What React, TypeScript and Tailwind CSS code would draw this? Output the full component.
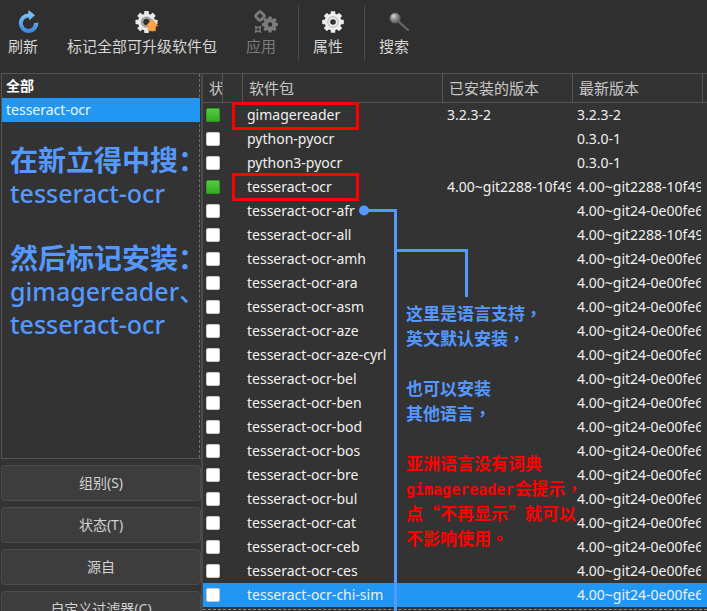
import React from "react";

type Pkg = { name: string; installed?: string; latest: string; selected?: boolean };

const LANG = "4.00~git24-0e00fe6";
const packages: Pkg[] = [
  { name: "gimagereader", installed: "3.2.3-2", latest: "3.2.3-2" },
  { name: "python-pyocr", latest: "0.3.0-1" },
  { name: "python3-pyocr", latest: "0.3.0-1" },
  { name: "tesseract-ocr", installed: "4.00~git2288-10f49", latest: "4.00~git2288-10f49" },
  { name: "tesseract-ocr-afr", latest: LANG },
  { name: "tesseract-ocr-all", latest: "4.00~git2288-10f49" },
  { name: "tesseract-ocr-amh", latest: LANG },
  { name: "tesseract-ocr-ara", latest: LANG },
  { name: "tesseract-ocr-asm", latest: LANG },
  { name: "tesseract-ocr-aze", latest: LANG },
  { name: "tesseract-ocr-aze-cyrl", latest: LANG },
  { name: "tesseract-ocr-bel", latest: LANG },
  { name: "tesseract-ocr-ben", latest: LANG },
  { name: "tesseract-ocr-bod", latest: LANG },
  { name: "tesseract-ocr-bos", latest: LANG },
  { name: "tesseract-ocr-bre", latest: LANG },
  { name: "tesseract-ocr-bul", latest: LANG },
  { name: "tesseract-ocr-cat", latest: LANG },
  { name: "tesseract-ocr-ceb", latest: LANG },
  { name: "tesseract-ocr-ces", latest: LANG },
  { name: "tesseract-ocr-chi-sim", latest: LANG, selected: true },
];

function Gear({ cx, cy, r, hole, fill }: { cx: number; cy: number; r: number; hole: number; fill: string }) {
  const tooth = r * 0.42;
  return (
    <g transform={`translate(${cx} ${cy})`}>
      {[0, 45, 90, 135, 180, 225, 270, 315].map((a) => (
        <rect key={a} x={-tooth / 2} y={-r} width={tooth} height={r * 0.5} rx={r * 0.06} fill={fill} transform={`rotate(${a})`} />
      ))}
      <circle r={(r * 0.78 + hole) / 2} fill="none" stroke={fill} strokeWidth={r * 0.78 - hole} />
    </g>
  );
}

function RefreshIcon() {
  return (
    <svg width="24" height="24" viewBox="0 0 24 24" aria-hidden="true">
      <defs>
        <linearGradient id="blue" x1="0" y1="0" x2="0" y2="1">
          <stop offset="0" stopColor="#8ccdf5" />
          <stop offset="1" stopColor="#3488dc" />
        </linearGradient>
      </defs>
      <path
        d="M12.4 0 L19 5.2 L13.2 10.6 L13 7.8 A5.6 5.6 0 1 0 18 13 L22.4 12.6 A9.8 9.8 0 1 1 12.4 3.4 Z"
        fill="url(#blue)"
      />
    </svg>
  );
}

function UpgradeIcon() {
  return (
    <svg width="24" height="24" viewBox="0 0 24 24" aria-hidden="true">
      <Gear cx={11.5} cy={12} r={11} hole={3.4} fill="#e9e9e9" />
      <circle cx="11.5" cy="12" r="4.6" fill="none" stroke="#9b9b9b" strokeWidth="2" />
      <path d="M17 9.2 L22.8 16 H20.4 V20.8 H13.6 V16 H11.2 Z" fill="#ffa64a" stroke="#ee8a2c" strokeWidth="0.8" />
    </svg>
  );
}

function ApplyIcon() {
  return (
    <svg width="24" height="24" viewBox="0 0 24 24" aria-hidden="true">
      <Gear cx={16} cy={14.5} r={8} hole={2.2} fill="#7c7c7c" />
      <path d="M6 0 L8 1 L11 4 L12 6 L11 8 L8 11 L6 12 L4 11 L1 8 L0 6 L1 4 L4 1 Z M6 3.2 L3.2 6 L6 8.8 L8.8 6 Z" fill="#777777" fillRule="evenodd" />
      <path d="M0.6 15.8 L4 16.8 L7.4 15.8 L6.6 19.4 L7.6 23 L4 22 L0.4 23 L1.4 19.4 Z M4 18 A1.4 1.4 0 1 0 4 20.8 A1.4 1.4 0 1 0 4 18 Z" fill="#777777" fillRule="evenodd" />
    </svg>
  );
}

function PropertiesIcon() {
  return (
    <svg width="24" height="24" viewBox="0 0 24 24" aria-hidden="true">
      <Gear cx={12} cy={12} r={10.8} hole={2.8} fill="#efefef" />
      <circle cx="12" cy="12" r="5.2" fill="none" stroke="#c4c4c4" strokeWidth="1.4" />
    </svg>
  );
}

function SearchIcon() {
  return (
    <svg width="24" height="24" viewBox="0 0 24 24" aria-hidden="true">
      <defs>
        <radialGradient id="lens" cx="0.35" cy="0.3" r="0.75">
          <stop offset="0" stopColor="#d6d6d6" />
          <stop offset="0.5" stopColor="#8f8f8f" />
          <stop offset="1" stopColor="#5a5a5a" />
        </radialGradient>
      </defs>
      <path d="M11.4 11.4 L21 20" stroke="#6b655f" strokeWidth="2.2" strokeLinecap="round" />
      <circle cx="8" cy="8" r="5" fill="url(#lens)" stroke="#666666" />
    </svg>
  );
}

function Tool({ label, icon, disabled }: { label: string; icon: React.ReactNode; disabled?: boolean }) {
  return (
    <button
      disabled={disabled}
      className="flex shrink-0 flex-col items-center gap-px text-[15px] leading-[22px] text-[#d6d6d6] disabled:text-[#7c7c7c]"
    >
      <span className="-mr-[10px] flex size-6 items-center justify-center">{icon}</span>
      {label}
    </button>
  );
}

function Divider() {
  return <div className="-mt-[5px] h-14 w-px shrink-0 bg-[#4a4a4a]" />;
}

function Sidebar() {
  return (
    <aside className="relative flex w-[201px] shrink-0 flex-col gap-[6px]">
      <div className="ml-px flex h-[386px] shrink-0 flex-col border-t border-b border-l border-[#555555]">
        <ul className="mr-px flex-1 border-r border-dashed border-[#707070] text-[14px] leading-6">
          <li className="pl-1 font-bold text-white">全部</li>
          <li className="-mr-px bg-[#2196f3] pl-1 text-[#eef6ff]">tesseract-ocr</li>
        </ul>
      </div>
      {["组别(S)", "状态(T)", "源自", "自定义过滤器(C)"].map((label) => (
        <button
          key={label}
          className="ml-px h-9 shrink-0 rounded-sm border border-[#4c4c4c] bg-[#3d3d3d] pb-[2px] text-[14px] text-[#d2d2d2]"
        >
          {label}
        </button>
      ))}
      <div className="absolute top-[71px] left-[10px] font-['Noto_Sans','Noto_Sans_CJK_SC',sans-serif] text-[25px] leading-[33px] font-medium whitespace-nowrap text-[#5599ff]">
        <p className="text-[28px] font-bold">在新立得中搜：</p>
        <p>tesseract-ocr</p>
        <p className="mt-8 text-[28px] font-bold">然后标记安装：</p>
        <p>gimagereader、</p>
        <p>tesseract-ocr</p>
      </div>
    </aside>
  );
}

const headCell = "h-[30px] overflow-hidden border-t border-r border-b border-[#555555] p-0 pl-[6px] text-left align-middle text-[15px] font-normal whitespace-nowrap text-[#c8c8c8] last:border-r-0";
const bodyCell = "h-6 p-0 pl-1 pr-[2px]";

function PackageTable() {
  return (
    <main className="relative min-w-0 flex-1 overflow-hidden border-l-2 border-[#4a4a4a]">
      <table className="w-full table-fixed border-separate border-spacing-0 text-[14px] leading-6 text-[#f0f0f0]">
        <colgroup>
          <col className="w-5" />
          <col className="w-5" />
          <col className="w-[200px]" />
          <col className="w-[130px]" />
          <col className="w-[130px]" />
          <col />
        </colgroup>
        <thead>
          <tr>
            <th scope="col" className={headCell}>状</th>
            <th scope="col" className={headCell}></th>
            <th scope="col" className={headCell}>软件包</th>
            <th scope="col" className={headCell}>已安装的版本</th>
            <th scope="col" className={headCell}>最新版本</th>
            <th scope="col" className={headCell}></th>
          </tr>
        </thead>
        <tbody>
          {packages.map((p) => (
            <tr key={p.name} className={p.selected ? "bg-[#2196f3]" : ""}>
              <td className="h-6 p-0 pl-[3px]">
                <input
                  type="checkbox"
                  aria-label={p.name}
                  defaultChecked={!!p.installed}
                  className="block size-[14px] appearance-none rounded-xs border border-[#c9c9c9] bg-white checked:border-[#2f9a22] checked:bg-linear-to-b checked:from-[#53c93c] checked:to-[#35ab25]"
                />
              </td>
              <td />
              <td className={bodyCell}><div className="overflow-hidden whitespace-nowrap">{p.name}</div></td>
              <td className={bodyCell}><div className="overflow-hidden whitespace-nowrap">{p.installed}</div></td>
              <td className={bodyCell}><div className="overflow-hidden whitespace-nowrap">{p.latest}</div></td>
              <td />
            </tr>
          ))}
        </tbody>
      </table>
      <div className="mt-[2px] border-t border-dashed border-[#8a8a8a]" />

      <div className="absolute top-[29px] left-[29px] h-7 w-[127px] border-3 border-[#ff0000]" />
      <div className="absolute top-[100px] left-[29px] h-7 w-[127px] border-3 border-[#ff0000]" />
      <svg className="absolute top-[130px] left-[155px]" width="115" height="410" viewBox="0 0 115 410" aria-hidden="true">
        <g fill="none" stroke="#5599ff" strokeWidth="3">
          <path d="M6 7.5 H37.5 V410" />
          <path d="M37.5 47.5 H108.5 V94" />
        </g>
        <circle cx="6" cy="7.5" r="5" fill="#5599ff" />
      </svg>
      <div className="absolute top-[227px] left-[203px] font-['Noto_Sans_CJK_TC','Noto_Sans_CJK_SC',sans-serif] text-[17px] leading-[25px] font-bold whitespace-nowrap text-[#5599ff]">
        <p>这里是语言支持，</p>
        <p>英文默认安装，</p>
        <p className="mt-[25px]">也可以安装</p>
        <p>其他语言，</p>
        <div className="mt-[25px] text-[#ff0000]">
          <p>亚洲语言没有词典</p>
          <p><span className="font-['DejaVu_Sans_Mono',monospace] text-[15px] leading-none">gimagereader</span>会提示，</p>
          <p>点“不再显示”就可以</p>
          <p>不影响使用。</p>
        </div>
      </div>
    </main>
  );
}

export default function App() {
  return (
    <div className="flex h-screen flex-col overflow-hidden bg-[#333333] font-['Noto_Sans','Noto_Sans_CJK_SC',sans-serif]">
      <header className="flex h-[73px] shrink-0 items-start bg-[#2f2f2f] pt-[10px] pl-2">
        <div className="flex gap-[29px]">
          <Tool label="刷新" icon={<RefreshIcon />} />
          <Tool label="标记全部可升级软件包" icon={<UpgradeIcon />} />
          <Tool label="应用" icon={<ApplyIcon />} disabled />
        </div>
        <div className="flex gap-[14px] pl-[22px]">
          <Divider />
          <Tool label="属性" icon={<PropertiesIcon />} />
          <div className="pl-[7px]"><Divider /></div>
          <Tool label="搜索" icon={<SearchIcon />} />
        </div>
      </header>
      <div className="flex min-h-0 flex-1">
        <Sidebar />
        <PackageTable />
      </div>
    </div>
  );
}
